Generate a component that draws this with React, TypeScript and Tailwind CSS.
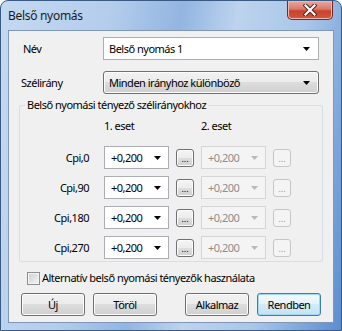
import React from "react";

const Arrow = ({ disabled }: { disabled?: boolean }) => (
  <svg width="7" height="4" viewBox="0 0 7 4">
    <path d="M0 0h7L3.5 4z" fill={disabled ? "#b9b9b9" : "#000"} />
  </svg>
);

const Combo = ({ value, disabled }: { value: string; disabled?: boolean }) => (
  <div
    className={
      disabled
        ? "flex h-[23px] items-center justify-between border border-[#d5d5d5] bg-[#f4f4f4] pl-[6px] pr-[7px] text-[#8e8e8e]"
        : "flex h-[23px] items-center justify-between border border-[#abadb3] bg-white pl-[6px] pr-[7px]"
    }
  >
    <span>{value}</span>
    <Arrow disabled={disabled} />
  </div>
);

const Dots = ({ disabled }: { disabled?: boolean }) => (
  <div
    className={
      disabled
        ? "flex h-[18px] w-[18px] items-end justify-center rounded-[3px] border border-[#c6c6c6] bg-[#f4f4f4] pb-[3px] text-[9px] leading-none tracking-normal text-[#9a9a9a]"
        : "flex h-[18px] w-[18px] items-end justify-center rounded-[3px] border border-[#707070] bg-[linear-gradient(#f4f4f4_0%,#ececec_50%,#dedede_50%,#d0d0d0_100%)] pb-[3px] text-[9px] leading-none tracking-normal shadow-[inset_0_0_0_1px_#fbfbfb]"
    }
  >
    ...
  </div>
);

const btn =
  "flex h-[23px] w-[64px] items-center justify-center rounded-[3px] border border-[#707070] bg-[linear-gradient(#f2f2f2_0%,#ebebeb_50%,#dddddd_50%,#cfcfcf_100%)] shadow-[inset_0_0_0_1px_#fcfcfc]";

const CloseButton = () => (
  <div className="mr-[1px] flex h-[19px] w-[46px] items-center justify-center rounded-b-[5px] border border-t-0 border-[#6f2b24] bg-[linear-gradient(#e9a99d_0%,#d9796a_45%,#c7432f_55%,#d2573c_100%)] shadow-[inset_0_0_0_1px_#f0b7ab]">
    <svg width="14" height="12" viewBox="0 0 14 12">
      <path d="M2.5 1.5l9 9M11.5 1.5l-9 9" stroke="#4a1c17" strokeWidth="4" strokeLinecap="square" />
      <path d="M2.5 1.5l9 9M11.5 1.5l-9 9" stroke="#fff" strokeWidth="2.2" strokeLinecap="square" />
    </svg>
  </div>
);

const rows = ["Cpi,0", "Cpi,90", "Cpi,180", "Cpi,270"];

export default function App() {
  return (
    <div className="h-[331px] w-[342px] font-['Noto_Sans',sans-serif] text-[11px] leading-[16px] tracking-[-0.5px] text-black">
      <div className="flex h-full flex-col rounded-t-[8px] border border-[#3a5a84] bg-[linear-gradient(100deg,#c4d9f1_0%,#b4cdec_28%,#92b5e1_46%,#bdd3ee_60%,#a9c6e9_78%,#5b8dcf_100%)] px-[7px] pb-[7px]">
        <div className="flex h-[29px] items-start justify-between">
          <span className="mt-[7px] text-[12px] tracking-[-0.3px] text-[#1a1a1a]">Belső nyomás</span>
          <CloseButton />
        </div>
        <div className="flex flex-1 flex-col border border-[#7f96b6] bg-[#f0f0f0]">
          <div className="mt-[6px] flex items-center pl-[14px]">
            <span className="w-[80px]">Név</span>
            <div className="flex h-[23px] w-[216px] items-center justify-between border border-[#abadb3] bg-white pl-[5px] pr-[8px]">
              <span>Belső nyomás 1</span>
              <Arrow />
            </div>
          </div>
          <div className="mt-[11px] flex items-center pl-[12px]">
            <span className="w-[82px]">Szélirány</span>
            <div className="flex h-[23px] w-[216px] items-center justify-between rounded-[3px] border border-[#707070] bg-[linear-gradient(#f2f2f2_0%,#ebebeb_50%,#dddddd_50%,#cfcfcf_100%)] pl-[5px] pr-[8px] shadow-[inset_0_0_0_1px_#fcfcfc]">
              <span>Minden irányhoz különböző</span>
              <Arrow />
            </div>
          </div>
          <div className="mx-[10px] mt-[3px]">
            <div className="flex h-[16px]">
              <div className="h-[8px] w-[6px] self-end rounded-tl-[3px] border-l border-t border-[#d5dfe5]" />
              <span className="px-[2px]">Belső nyomási tényező szélirányokhoz</span>
              <div className="h-[8px] flex-1 self-end rounded-tr-[3px] border-r border-t border-[#d5dfe5]" />
            </div>
            <div className="grid grid-cols-[77px_65px_18px_65px_18px] items-center gap-x-[7px] gap-y-[7px] rounded-b-[3px] border-x border-b border-[#d5dfe5] pb-[2px] pt-[5px]">
              <span className="col-start-2 mb-[5px]">1. eset</span>
              <span className="col-start-4 mb-[5px]">2. eset</span>
              {rows.map((r) => (
                <React.Fragment key={r}>
                  <span className="col-start-1 pr-[8px] text-right">{r}</span>
                  <Combo value="+0,200" />
                  <Dots />
                  <Combo value="+0,200" disabled />
                  <Dots disabled />
                </React.Fragment>
              ))}
            </div>
          </div>
          <div className="mt-[8px] flex items-center pl-[18px]">
            <div className="h-[13px] w-[13px] border border-[#8e8f8f] bg-[linear-gradient(135deg,#cbcfd5_0%,#e6e6e6_60%,#f6f6f6_100%)] shadow-[inset_0_0_0_1px_#f4f4f4]" />
            <span className="ml-[2px]">Alternatív belső nyomási tényezők használata</span>
          </div>
          <div className="mt-[7px] flex justify-between px-[12px]">
            <div className="flex gap-[8px]">
              <div className={btn}>Új</div>
              <div className={btn}>Töröl</div>
            </div>
            <div className="flex gap-[8px]">
              <div className={btn}>Alkalmaz</div>
              <div className="flex h-[23px] w-[64px] items-center justify-center rounded-[3px] border border-[#3c7fb1] bg-[linear-gradient(#f3f9fd_0%,#e4f2fb_50%,#d4eaf8_50%,#c6e2f5_100%)] shadow-[inset_0_0_0_1px_#9fd8f5]">
                Rendben
              </div>
            </div>
          </div>
        </div>
      </div>
    </div>
  );
}
